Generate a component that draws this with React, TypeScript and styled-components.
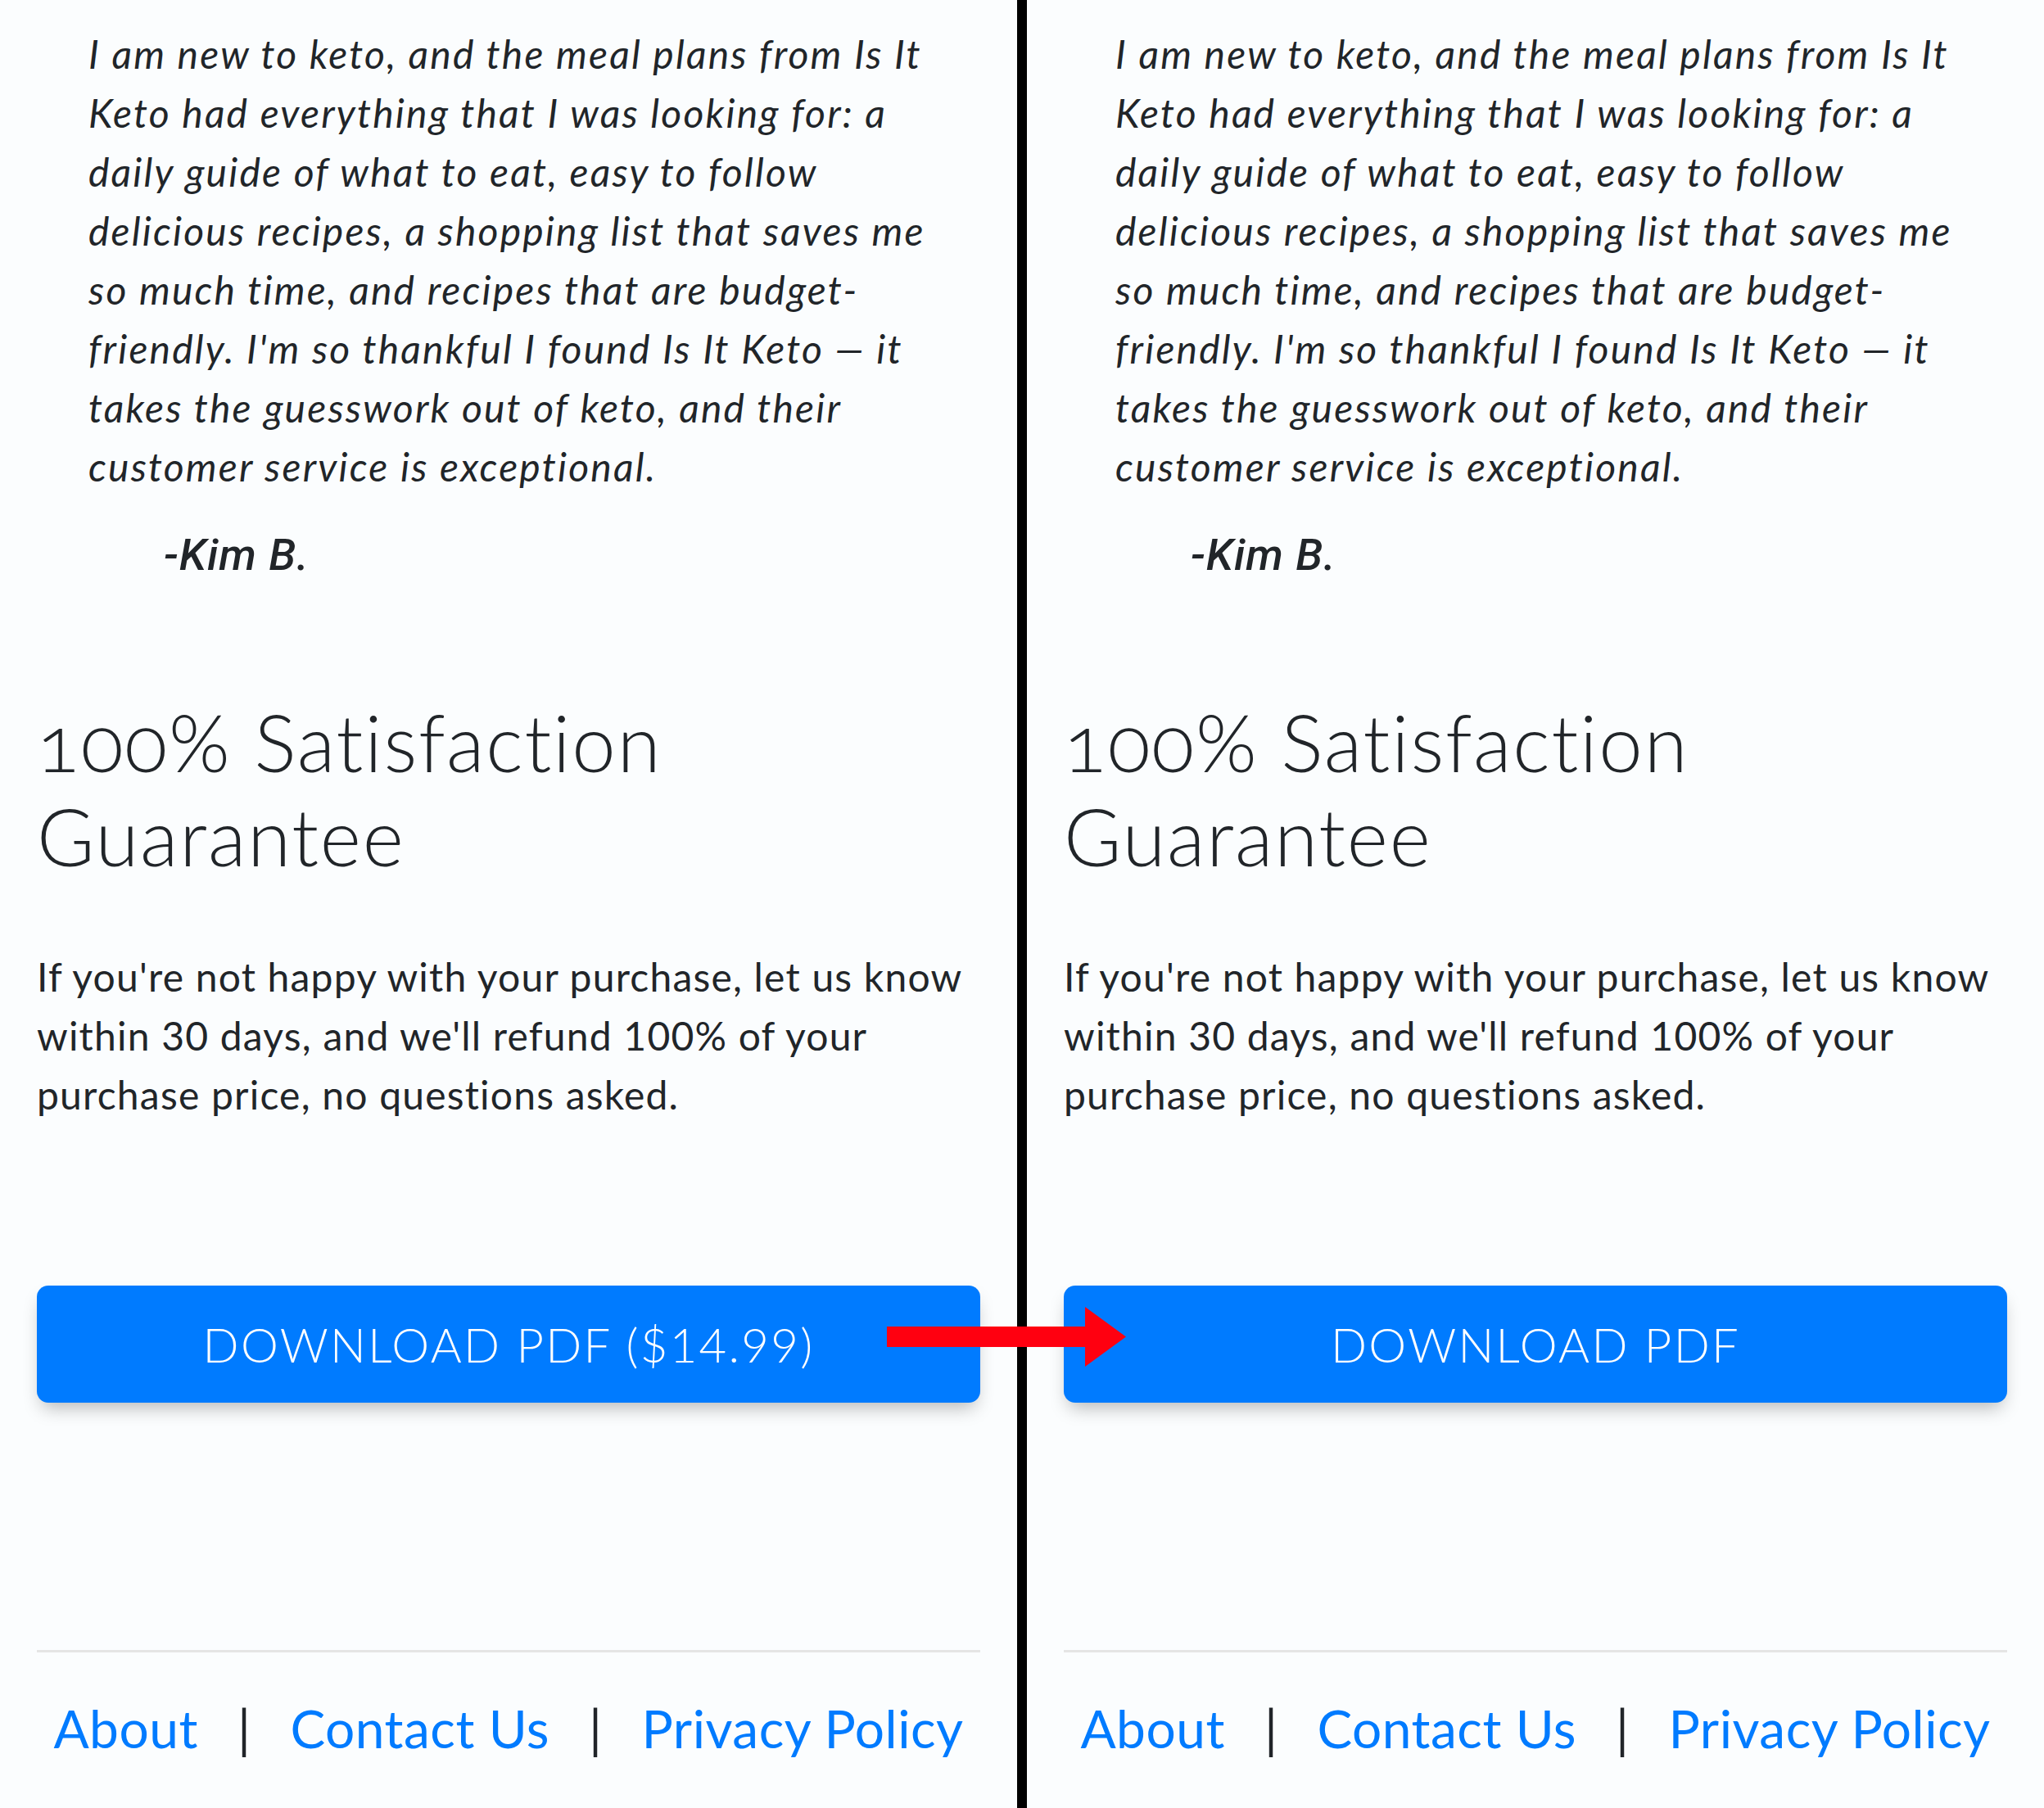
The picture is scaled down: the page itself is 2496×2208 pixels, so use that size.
import styled, { createGlobalStyle } from "styled-components";

const GlobalStyle = createGlobalStyle`
  body {
    margin: 0;
    background: #fbfdfe;
  }
`;

const Page = styled.main`
  position: relative;
  display: flex;
  width: 2496px;
  height: 2208px;
  overflow: hidden;
  background: #fbfdfe;
`;

const Panel = styled.section`
  width: 1242px;
  box-sizing: border-box;
  padding: 30px 45px 0;
  display: flex;
  flex-direction: column;
  color: #212529;
  font-family: "Lato", "Noto Sans", sans-serif;
`;

const Divider = styled.div`
  width: 12px;
  background: #000;
`;

const Quote = styled.blockquote`
  margin: 0 40px 0 63px;
  font-size: 48px;
  line-height: 72px;
  font-style: italic;
  letter-spacing: 2.2px;
`;

const Author = styled.p`
  margin: 39px 0 0 155px;
  font-family: "Roboto", "Liberation Sans", sans-serif;
  font-style: italic;
  font-weight: 500;
  font-size: 54px;
  line-height: 65px;
  letter-spacing: 1px;
`;

const Heading = styled.h2`
  margin: 138px 0 0;
  font-size: 96px;
  line-height: 115px;
  font-weight: 300;
  letter-spacing: 1.8px;
  font-variant-numeric: oldstyle-nums;
`;

const Body = styled.p`
  margin: 79px 0 0;
  font-size: 48px;
  line-height: 72px;
  letter-spacing: 1.2px;
`;

const Button = styled.button`
  margin-top: 197px;
  height: 143px;
  width: 100%;
  border: 0;
  border-radius: 14px;
  background: #007bff;
  color: #fff;
  font-family: inherit;
  font-size: 58px;
  font-weight: 300;
  letter-spacing: 2.3px;
  text-transform: uppercase;
  box-shadow: 0 12px 22px -6px rgba(0, 0, 0, 0.28);
`;

const Rule = styled.hr`
  margin: 302px 0 0;
  border: 0;
  border-top: 3px solid #e5e5e5;
`;

const Footer = styled.nav`
  margin-top: 45px;
  text-align: center;
  font-size: 64px;
  line-height: 96px;
  letter-spacing: 0.5px;
`;

const FooterLink = styled.a`
  color: #007bff;
  text-decoration: none;
`;

const Sep = styled.span`
  color: #212529;
  margin: 0 48px;
`;

const Arrow = styled.svg`
  position: absolute;
  left: 1083px;
  top: 1596px;
`;

const PdfPanel = ({ label }: { label: string }) => (
  <Panel>
    <Quote>
      I am new to keto, and the meal plans from Is It Keto had everything that
      I was looking for: a daily guide of what to eat, easy to follow delicious
      recipes, a shopping list that saves me so much time, and recipes that are
      budget-friendly. I'm so thankful I found Is It Keto — it takes the
      guesswork out of keto, and their customer service is exceptional.
    </Quote>
    <Author>-Kim B.</Author>
    <Heading>100% Satisfaction Guarantee</Heading>
    <Body>
      If you're not happy with your purchase, let us know within 30 days, and
      we'll refund 100% of your purchase price, no questions asked.
    </Body>
    <Button>{label}</Button>
    <Rule />
    <Footer>
      <FooterLink href="#">About</FooterLink>
      <Sep>|</Sep>
      <FooterLink href="#">Contact Us</FooterLink>
      <Sep>|</Sep>
      <FooterLink href="#">Privacy Policy</FooterLink>
    </Footer>
  </Panel>
);

const App = () => (
  <>
    <GlobalStyle />
    <Page>
      <PdfPanel label="Download PDF ($14.99)" />
      <Divider />
      <PdfPanel label="Download PDF" />
      <Arrow width="292" height="73" viewBox="0 0 292 73">
        <polygon
          points="0,24 242,24 242,0 292,36.5 242,73 242,49 0,49"
          fill="#ff0010"
        />
      </Arrow>
    </Page>
  </>
);

export default App;
